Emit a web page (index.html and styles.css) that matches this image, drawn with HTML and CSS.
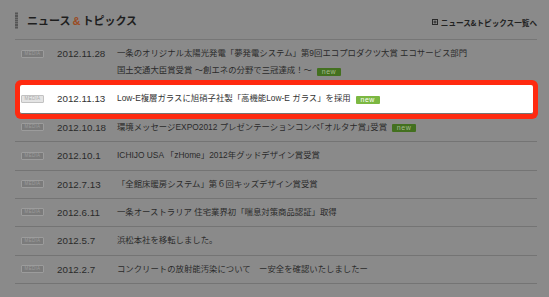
FILE: index.html
```html
<!DOCTYPE html>
<html lang="ja">
<head>
    <meta charset="UTF-8">
    <title>ニュース&amp;トピックス</title>
    <link rel="stylesheet" href="styles.css">
</head>
<body>
    <div class="news">
        <!-- Header -->
        <div class="news-head">
            <h2 class="news-title">ニュース<span class="amp">&amp;</span>トピックス</h2>
            <a class="news-more" href="#">
                <svg class="more-icon" width="6" height="6" viewBox="0 0 6 6">
                    <rect x="0.5" y="0.5" width="5" height="5" fill="none" stroke="#2a2a2a" stroke-width="1"/>
                    <path d="M1.5 3h3M3 1.5v3" stroke="#2a2a2a" stroke-width="1"/>
                </svg>
                ニュース&amp;トピックス一覧へ
            </a>
        </div>

        <!-- List -->
        <ul class="news-list">
            <li class="news-item">
                <span class="badge">MEDIA</span>
                <span class="date">2012.11.28</span>
                <span class="text">一条のオリジナル太陽光発電「夢発電システム」第9回エコプロダクツ大賞 エコサービス部門<br>国土交通大臣賞受賞 〜創エネの分野で三冠達成！〜<span class="new">new</span></span>
            </li>
            <li class="news-item active">
                <span class="badge">MEDIA</span>
                <span class="date">2012.11.13</span>
                <span class="text">Low-E複層ガラスに旭硝子社製「高機能Low-E ガラス」を採用<span class="new">new</span></span>
            </li>
            <li class="news-item">
                <span class="badge">MEDIA</span>
                <span class="date">2012.10.18</span>
                <span class="text">環境メッセージEXPO2012 プレゼンテーションコンペ｢オルタナ賞｣受賞<span class="new">new</span></span>
            </li>
            <li class="news-item">
                <span class="badge">MEDIA</span>
                <span class="date">2012.10.1</span>
                <span class="text">ICHIJO USA 「zHome」2012年グッドデザイン賞受賞</span>
            </li>
            <li class="news-item">
                <span class="badge">MEDIA</span>
                <span class="date">2012.7.13</span>
                <span class="text">「全館床暖房システム」第６回キッズデザイン賞受賞</span>
            </li>
            <li class="news-item">
                <span class="badge">MEDIA</span>
                <span class="date">2012.6.11</span>
                <span class="text">一条オーストラリア 住宅業界初「喘息対策商品認証」取得</span>
            </li>
            <li class="news-item">
                <span class="badge">MEDIA</span>
                <span class="date">2012.5.7</span>
                <span class="text">浜松本社を移転しました。</span>
            </li>
            <li class="news-item">
                <span class="badge">MEDIA</span>
                <span class="date">2012.2.7</span>
                <span class="text">コンクリートの放射能汚染について　ー安全を確認いたしましたー</span>
            </li>
        </ul>
    </div>
</body>
</html>
```

FILE: styles.css
```css
body {
    margin: 0;
    background-color: #8a8a8a;
    font-family: "Liberation Sans", "Noto Sans CJK JP", sans-serif;
    color: #2a2a2a;
}

.news {
    margin-left: 15px;
    width: 522px;
}

/* Header */
.news-head {
    display: flex;
    justify-content: space-between;
    height: 39px;
    border-bottom: 1px solid #767676;
}

.news-title {
    margin: 12px 0 0;
    padding-left: 9px;
    height: 17px;
    border-left: 3px solid transparent;
    border-image: repeating-linear-gradient(#565656 0 1px, #6e6e6e 1px 2px) 1;
    font-family: "Noto Sans CJK JP", sans-serif;
    font-size: 11px;
    font-weight: bold;
    line-height: 17px;
    color: #1e1e1e;
}

.amp {
    margin: 0 2px;
    font-family: "Liberation Sans", sans-serif;
    color: #9b4a22;
}

.news-more {
    display: flex;
    align-items: center;
    gap: 2px;
    margin-top: 17px;
    height: 10px;
    font-family: "Noto Sans CJK JP", sans-serif;
    font-size: 7.6px;
    font-weight: bold;
    color: #222;
    text-decoration: none;
}

.more-icon {
    margin-right: 1px;
}

/* List */
.news-list {
    list-style: none;
    margin: 0;
    padding: 0;
}

.news-item {
    display: flex;
    align-items: flex-start;
    padding: 5px 0 5.4px;
    border-bottom: 1px solid #747474;
    line-height: 17px;
}

.badge {
    flex: none;
    width: 21px;
    height: 6px;
    margin: 4.5px 0 0 6px;
    border: 1px solid #9c9c9c;
    border-radius: 1px;
    background-color: #7b7b7b;
    font-size: 4.5px;
    line-height: 6px;
    letter-spacing: 0.3px;
    text-align: center;
    color: #9c9c9c;
}

.date {
    flex: none;
    width: 60px;
    margin-left: 13px;
    font-size: 9.8px;
}

.text {
    font-size: 8.4px;
}

.new {
    display: inline-block;
    width: 24px;
    height: 8px;
    margin-left: 5px;
    border-radius: 1px;
    background-color: #43701f;
    font-family: "Liberation Sans", sans-serif;
    font-size: 7px;
    line-height: 8px;
    letter-spacing: 0.5px;
    text-align: center;
    vertical-align: -0.5px;
    color: #a6bb90;
}

/* Highlighted row */
.news-item.active {
    margin: 0 4px 0 5px;
    background-color: #fff;
    border-radius: 2px;
    box-shadow: 0 0 0 5px #ff2a10;
    color: #333;
}

.active .badge {
    margin-left: 1px;
    background-color: #e4e4e4;
    border-color: #c2c2c2;
    color: #aaa;
}

.active .new {
    background-color: #7cb842;
    color: #fff;
}
```
